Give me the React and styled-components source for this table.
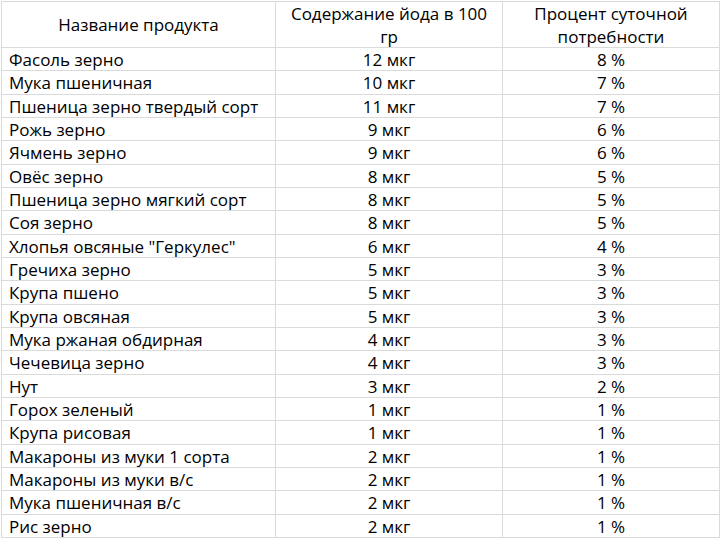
import React from "react";
import styled, { createGlobalStyle } from "styled-components";

const GlobalStyles = createGlobalStyle`
  html, body {
    margin: 0;
    padding: 0;
    background: #fff;
  }
`;

const Grid = styled.div`
  display: grid;
  grid-template-columns: 273px 226px 216px;
  grid-template-rows: 45px repeat(21, 1fr);
  gap: 1px;
  width: 719px;
  height: 537px;
  box-sizing: border-box;
  margin: 1px 0 0 1px;
  padding: 1px;
  background: #dadada;
  font-family: "Open Sans", "Noto Sans", sans-serif;
  font-size: 17px;
  color: #000;
`;

const Cell = styled.div`
  background: #fff;
  display: flex;
  align-items: center;
  justify-content: ${(p) => (p.$left ? "flex-start" : "center")};
  text-align: ${(p) => (p.$left ? "left" : "center")};
  padding: ${(p) => (p.$left ? "2px 0 0 7px" : "2px 8px 0")};
  white-space: nowrap;
  line-height: 20px;
`;

const HeadCell = styled(Cell)`
  white-space: normal;
  line-height: 23px;
  padding: 0 12px;
  align-items: center;
`;

const rows = [
  ["Фасоль зерно", "12 мкг", "8 %"],
  ["Мука пшеничная", "10 мкг", "7 %"],
  ["Пшеница зерно твердый сорт", "11 мкг", "7 %"],
  ["Рожь зерно", "9 мкг", "6 %"],
  ["Ячмень зерно", "9 мкг", "6 %"],
  ["Овёс зерно", "8 мкг", "5 %"],
  ["Пшеница зерно мягкий сорт", "8 мкг", "5 %"],
  ["Соя зерно", "8 мкг", "5 %"],
  ["Хлопья овсяные \"Геркулес\"", "6 мкг", "4 %"],
  ["Гречиха зерно", "5 мкг", "3 %"],
  ["Крупа пшено", "5 мкг", "3 %"],
  ["Крупа овсяная", "5 мкг", "3 %"],
  ["Мука ржаная обдирная", "4 мкг", "3 %"],
  ["Чечевица зерно", "4 мкг", "3 %"],
  ["Нут", "3 мкг", "2 %"],
  ["Горох зеленый", "1 мкг", "1 %"],
  ["Крупа рисовая", "1 мкг", "1 %"],
  ["Макароны из муки 1 сорта", "2 мкг", "1 %"],
  ["Макароны из муки в/с", "2 мкг", "1 %"],
  ["Мука пшеничная в/с", "2 мкг", "1 %"],
  ["Рис зерно", "2 мкг", "1 %"],
];

export default function App() {
  return (
    <>
      <GlobalStyles />
      <Grid>
        <HeadCell>Название продукта</HeadCell>
        <HeadCell>Содержание йода в 100 гр</HeadCell>
        <HeadCell>Процент суточной потребности</HeadCell>
        {rows.map(([name, amount, pct]) => (
          <React.Fragment key={name}>
            <Cell $left>{name}</Cell>
            <Cell>{amount}</Cell>
            <Cell>{pct}</Cell>
          </React.Fragment>
        ))}
      </Grid>
    </>
  );
}
